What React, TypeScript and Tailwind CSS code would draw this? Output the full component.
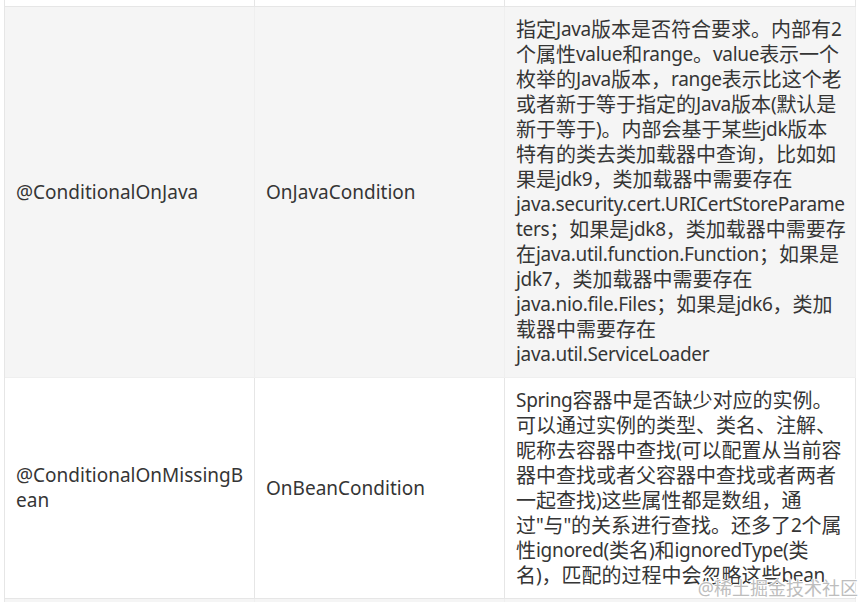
import React from "react";

const lines1 = [
  "指定Java版本是否符合要求。内部有2",
  "个属性value和range。value表示一个",
  "枚举的Java版本，range表示比这个老",
  "或者新于等于指定的Java版本(默认是",
  "新于等于)。内部会基于某些jdk版本",
  "特有的类去类加载器中查询，比如如",
  "果是jdk9，类加载器中需要存在",
  "java.security.cert.URICertStoreParame",
  "ters；如果是jdk8，类加载器中需要存",
  "在java.util.function.Function；如果是",
  "jdk7，类加载器中需要存在",
  "java.nio.file.Files；如果是jdk6，类加",
  "载器中需要存在",
  "java.util.ServiceLoader",
];

const lines2 = [
  "Spring容器中是否缺少对应的实例。",
  "可以通过实例的类型、类名、注解、",
  "昵称去容器中查找(可以配置从当前容",
  "器中查找或者父容器中查找或者两者",
  "一起查找)这些属性都是数组，通",
  "过\"与\"的关系进行查找。还多了2个属",
  "性ignored(类名)和ignoredType(类",
  "名)，匹配的过程中会忽略这些bean",
];

const CJK = /[\u3000-\u9fff\uff00-\uffef]/;

function Line({ text }: { text: string }) {
  const runs = text.match(/[\u3000-\u9fff\uff00-\uffef]+|[^\u3000-\u9fff\uff00-\uffef]+/g) || [];
  return (
    <div className="h-[25px] whitespace-nowrap">
      {runs.map((r, i) =>
        CJK.test(r) ? (
          <span key={i} className="text-[20px] align-top leading-[25px]">
            {r}
          </span>
        ) : (
          <span key={i} className="tracking-[-0.3px] align-top leading-[25px]">
            {r}
          </span>
        )
      )}
    </div>
  );
}

function Lines({ lines }: { lines: string[] }) {
  return (
    <>
      {lines.map((l, i) => (
        <Line key={i} text={l} />
      ))}
    </>
  );
}

export default function App() {
  return (
    <div
      className="relative w-[862px] h-[602px] overflow-hidden bg-white text-[#353535] text-[19px] leading-[25px]"
      style={{ fontFamily: '"Noto Sans", "Noto Sans CJK SC", sans-serif' }}
    >
      <div className="ml-[4px] w-[852px] border-l border-[#e6e6e6]">
        {/* partial top row */}
        <div className="grid grid-cols-[250px_250px_351px] h-[7px] bg-white">
          <div className="border-r border-b border-[#e6e6e6]" />
          <div className="border-r border-b border-[#e6e6e6]" />
          <div className="border-r border-b border-[#e6e6e6]" />
        </div>
        {/* row 1 */}
        <div className="grid grid-cols-[250px_250px_351px] bg-[#f5f5f5]">
          <div className="flex items-center px-[11px] py-[10px] border-r border-b border-[#efefef]">
            @ConditionalOnJava
          </div>
          <div className="flex items-center px-[11px] py-[10px] border-r border-b border-[#efefef]">
            OnJavaCondition
          </div>
          <div className="px-[11px] py-[10px] border-r border-b border-[#efefef]">
            <Lines lines={lines1} />
          </div>
        </div>
        {/* row 2 */}
        <div className="grid grid-cols-[250px_250px_351px] bg-white">
          <div className="flex items-center px-[11px] py-[10px] border-r border-b border-[#e6e6e6]">
            <div>
              <div>@ConditionalOnMissingB</div>
              <div>ean</div>
            </div>
          </div>
          <div className="flex items-center px-[11px] py-[10px] border-r border-b border-[#e6e6e6]">
            OnBeanCondition
          </div>
          <div className="px-[11px] py-[10px] border-r border-b border-[#e6e6e6]">
            <Lines lines={lines2} />
          </div>
        </div>
        {/* next row partial */}
        <div className="grid grid-cols-[250px_250px_351px] h-[40px] bg-[#f5f5f5]">
          <div className="border-r border-[#efefef]" />
          <div className="border-r border-[#efefef]" />
          <div className="border-r border-[#efefef]" />
        </div>
      </div>
      <div
        className="absolute right-[4px] bottom-[2px] text-[18px] leading-[24px] text-[#bdbdbd] whitespace-nowrap"
        style={{
          textShadow:
            "1px 0 0 #fff, -1px 0 0 #fff, 0 1px 0 #fff, 0 -1px 0 #fff",
        }}
      >
        @稀土掘金技术社区
      </div>
    </div>
  );
}
